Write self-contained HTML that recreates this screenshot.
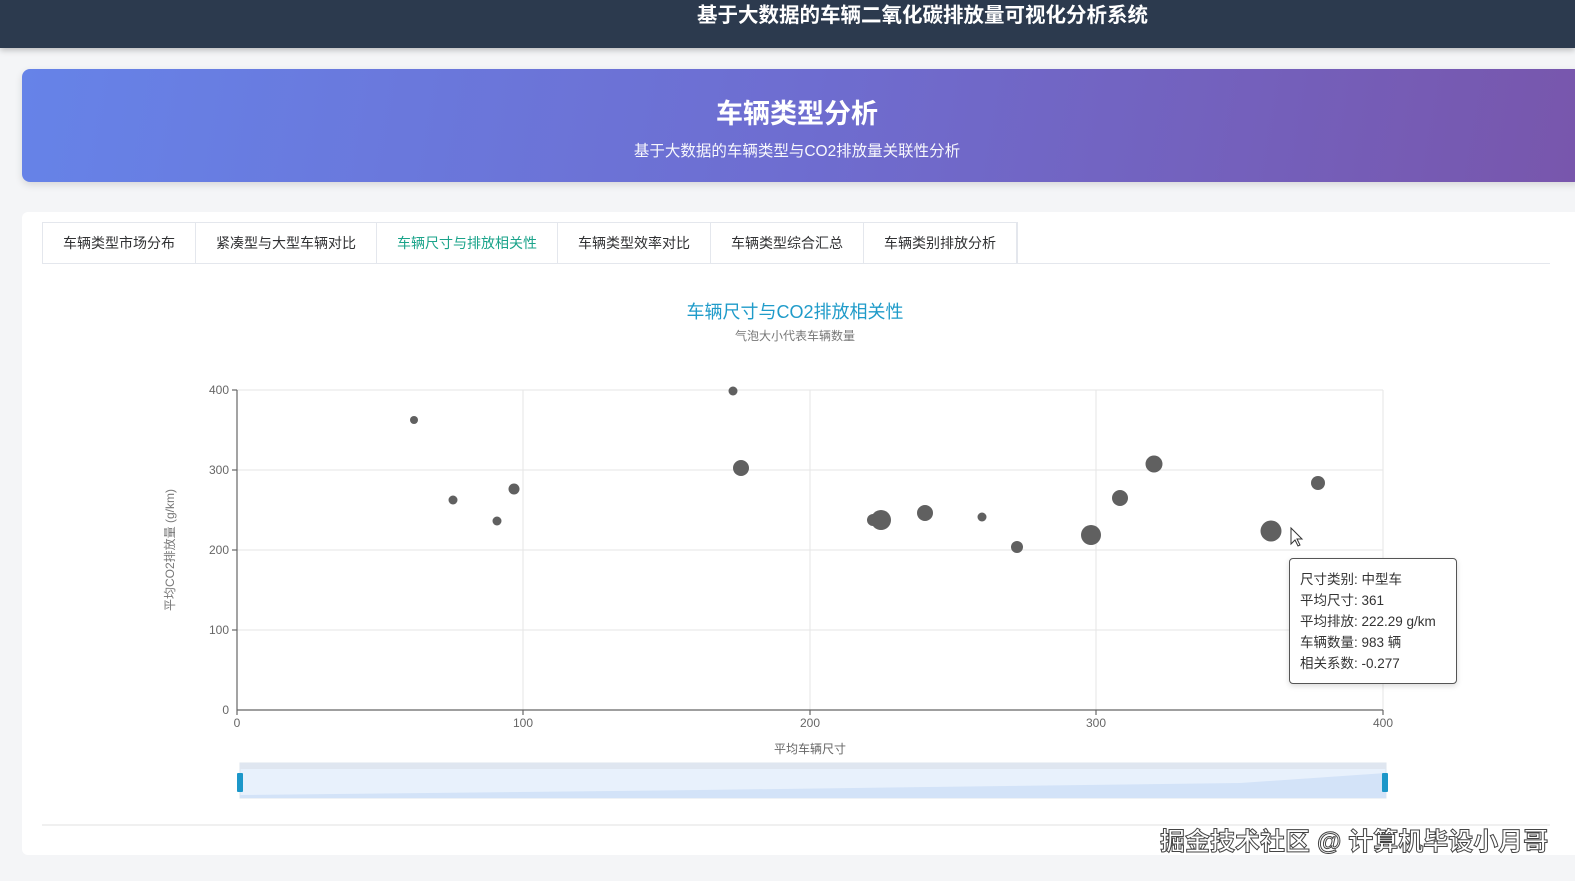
<!DOCTYPE html>
<html><head><meta charset="utf-8"><style>
*{margin:0;padding:0;box-sizing:border-box}
body{width:1575px;height:881px;background:#f4f5f7;font-family:"Liberation Sans","Noto Sans CJK SC",sans-serif;position:relative;overflow:hidden}
.top{position:absolute;left:0;top:0;width:1575px;height:48px;background:#2c3a4e;box-shadow:0 2px 6px rgba(0,0,0,.25);color:#fff;font-weight:bold;font-size:20.5px;text-align:center;line-height:32px;padding-left:270px}
.banner{position:absolute;left:22px;top:69px;width:1560px;height:113px;border-radius:8px;background:linear-gradient(100deg,#6683e8,#6e6dd0 50%,#7856ac);color:#fff;text-align:center;box-shadow:0 3px 8px rgba(0,0,0,.12)}
.banner h1{font-size:27px;margin-top:23px;margin-left:-10px}
.banner p{font-size:15.5px;margin-top:8px;margin-left:-10px;opacity:.95}
.card{position:absolute;left:22px;top:212px;width:1560px;height:643px;background:#fff;border-radius:6px}
.tabs{position:absolute;left:20px;top:10px;height:41px;display:flex;border:1px solid #e4e7ed;border-bottom:none}
.tabs div{padding:0 20px;line-height:41px;font-size:14px;color:#303133;border-right:1px solid #e4e7ed}
.tabs div.act{color:#1aa38a;background:#fff}
.tabline{position:absolute;left:20px;top:51px;width:1508px;height:1px;background:#e4e7ed}
.ttl{position:absolute;left:0;width:1590px;text-align:center}
.tip{position:absolute;left:1289px;top:558px;width:168px;height:126px;background:#fff;border:1px solid #555;border-radius:4px;box-shadow:0 2px 6px rgba(0,0,0,.15);font-size:13.5px;color:#333;padding:10px 0 0 10px;line-height:21px}
.wm{position:absolute;left:1160px;top:822px;font-size:25px;color:#fff;-webkit-text-stroke:1px #444;font-weight:bold;white-space:nowrap}
</style></head><body>
<div class="top">基于大数据的车辆二氧化碳排放量可视化分析系统</div>
<div class="banner"><h1>车辆类型分析</h1><p>基于大数据的车辆类型与CO2排放量关联性分析</p></div>
<div class="card">
<div class="tabs"><div>车辆类型市场分布</div><div>紧凑型与大型车辆对比</div><div class="act">车辆尺寸与排放相关性</div><div>车辆类型效率对比</div><div>车辆类型综合汇总</div><div>车辆类别排放分析</div></div>
<div class="tabline"></div>
<div style="position:absolute;left:20px;top:612px;width:1508px;height:2px;background:#f0f0f0"></div>
</div>
<div class="ttl" style="top:298px;font-size:18px;color:#1f9bc9">车辆尺寸与CO2排放相关性</div>
<div class="ttl" style="top:327px;font-size:12px;color:#777">气泡大小代表车辆数量</div>
<svg style="position:absolute;left:0;top:0" width="1575" height="881" font-family="Liberation Sans, Noto Sans CJK SC, sans-serif">
<g stroke="#e6e6e6" stroke-width="1">
<line x1="237" y1="390" x2="1383" y2="390"/><line x1="237" y1="470" x2="1383" y2="470"/><line x1="237" y1="550" x2="1383" y2="550"/><line x1="237" y1="630" x2="1383" y2="630"/>
<line x1="523" y1="390" x2="523" y2="710"/><line x1="810" y1="390" x2="810" y2="710"/><line x1="1096" y1="390" x2="1096" y2="710"/><line x1="1383" y1="390" x2="1383" y2="710"/>
</g>
<g stroke="#666" stroke-width="1.2"><line x1="237" y1="390" x2="237" y2="710"/><line x1="237" y1="710" x2="1383" y2="710"/>
<line x1="232" y1="390" x2="237" y2="390"/><line x1="232" y1="470" x2="237" y2="470"/><line x1="232" y1="550" x2="237" y2="550"/><line x1="232" y1="630" x2="237" y2="630"/>
<line x1="237" y1="710" x2="237" y2="715"/><line x1="523" y1="710" x2="523" y2="715"/><line x1="810" y1="710" x2="810" y2="715"/><line x1="1096" y1="710" x2="1096" y2="715"/><line x1="1383" y1="710" x2="1383" y2="715"/></g>
<g font-size="12" fill="#666" text-anchor="end"><text x="229" y="394">400</text><text x="229" y="474">300</text><text x="229" y="554">200</text><text x="229" y="634">100</text><text x="229" y="714">0</text></g>
<g font-size="12" fill="#666" text-anchor="middle"><text x="237" y="727">0</text><text x="523" y="727">100</text><text x="810" y="727">200</text><text x="1096" y="727">300</text><text x="1383" y="727">400</text>
<text x="810" y="753">平均车辆尺寸</text></g>
<text transform="translate(174,550) rotate(-90)" font-size="12" fill="#777" text-anchor="middle">平均CO2排放量 (g/km)</text>
<g fill="#606060">
<circle cx="414" cy="420" r="4"/><circle cx="453" cy="500" r="4.5"/><circle cx="497" cy="521" r="4.5"/><circle cx="514" cy="489" r="5.5"/>
<circle cx="733" cy="391" r="4.5"/><circle cx="741" cy="468" r="8"/><circle cx="873" cy="520" r="6"/><circle cx="881" cy="520" r="10"/>
<circle cx="925" cy="513" r="8"/><circle cx="982" cy="517" r="4.5"/><circle cx="1017" cy="547" r="6"/><circle cx="1091" cy="535" r="10"/>
<circle cx="1120" cy="498" r="8"/><circle cx="1154" cy="464" r="8.5"/><circle cx="1271" cy="531" r="10.5"/><circle cx="1318" cy="483" r="7"/>
</g>
<path d="M1291 528 l0 16 l4 -4 l3 6 l2 -1 l-3 -6 l5 0 z" fill="#fff" stroke="#333" stroke-width="1"/>
<rect x="240" y="763" width="1146" height="35" fill="#e8f1fc" stroke="#dde4ee"/>
<rect x="240" y="763" width="1146" height="6" fill="#dfe6f0"/>
<path d="M240 795 L700 790 L1240 783 L1386 773 L1386 798 L240 798 z" fill="#d3e3f8"/>
<rect x="237" y="773" width="6" height="19" rx="1" fill="#1c97c9"/>
<rect x="1382" y="773" width="6" height="19" rx="1" fill="#1c97c9"/>
</svg>
<div class="tip">尺寸类别: 中型车<br>平均尺寸: 361<br>平均排放: 222.29 g/km<br>车辆数量: 983 辆<br>相关系数: -0.277</div>
<div class="wm">掘金技术社区 @ 计算机毕设小月哥</div>
</body></html>
